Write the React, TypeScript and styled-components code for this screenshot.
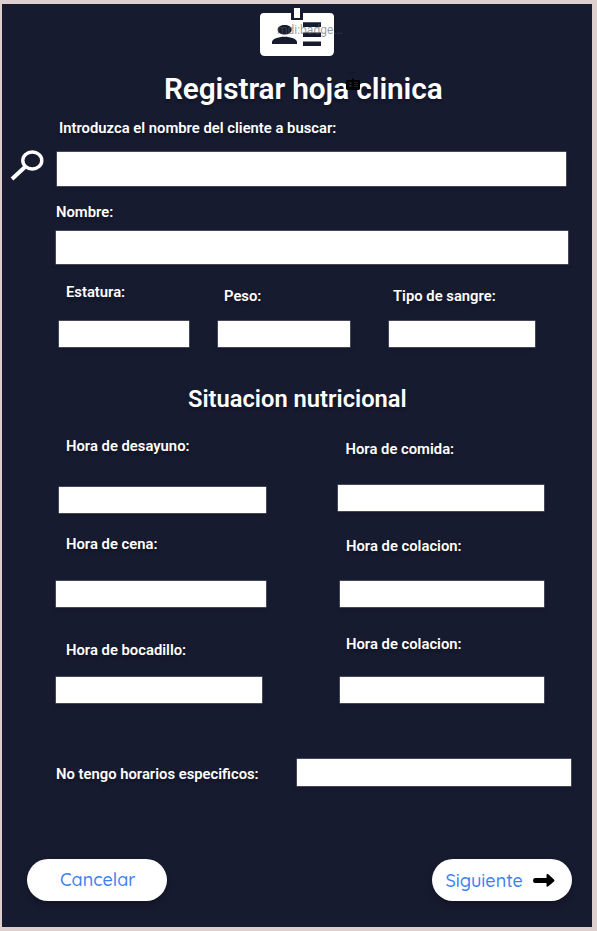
import React from "react";
import styled, { createGlobalStyle } from "styled-components";

const GlobalStyle = createGlobalStyle`
  * { box-sizing: border-box; }
  body { margin: 0; background: #dccfcd; }
`;

const Page = styled.div`
  width: 597px;
  height: 931px;
  padding: 4px 5.5px 4.5px 2px;
  background: #dccfcd;
  overflow: hidden;
`;

const Panel = styled.main`
  display: flex;
  flex-direction: column;
  height: 922.5px;
  background: #171b30;
  color: #fff;
  font-family: Roboto, "Liberation Sans", sans-serif;
`;

const Header = styled.header`
  position: relative;
  height: 56px;
  padding: 4px 0 0 258px;
`;

const BadgeCaption = styled.span`
  position: absolute;
  left: 275px;
  top: 18px;
  font-size: 12px;
  line-height: 16px;
  color: rgba(90, 90, 90, 0.6);
  white-space: nowrap;
`;

const Title = styled.h1`
  position: relative;
  height: 58px;
  margin: 0 0 0 162px;
  font-size: 29.8px;
  line-height: 58px;
  font-weight: 600;
  letter-spacing: -0.1px;
  white-space: nowrap;
  text-shadow: 0 3px 3px rgba(0, 0, 0, 0.25);
`;

const SmallBadge = styled.svg`
  position: absolute;
  left: 182px;
  top: 12px;
`;

const Subtitle = styled.h2`
  margin: 0 0 0 186px;
  padding-top: 37px;
  height: 87px;
  font-size: 23.7px;
  line-height: 31px;
  font-weight: 600;
  white-space: nowrap;
  text-shadow: 0 3px 3px rgba(0, 0, 0, 0.25);
`;

const Row = styled.div<{ $height: number; $left: number }>`
  display: flex;
  flex: none;
  align-items: flex-end;
  height: ${(p) => p.$height}px;
  padding-left: ${(p) => p.$left}px;
`;

const FieldBox = styled.label<{ $gap: number; $before: number; $lift: number }>`
  display: flex;
  flex-direction: column;
  gap: ${(p) => p.$gap}px;
  margin-left: ${(p) => p.$before}px;
  margin-bottom: ${(p) => p.$lift}px;
`;

const LabelText = styled.span<{ $indent?: number }>`
  padding-left: ${(p) => p.$indent ?? 0}px;
  font-size: 14.8px;
  line-height: 20px;
  font-weight: 600;
  white-space: nowrap;
  text-shadow: 0 3px 3px rgba(0, 0, 0, 0.25);
`;

const Input = styled.input<{ $width: number; $height: number }>`
  display: block;
  width: ${(p) => p.$width}px;
  height: ${(p) => p.$height}px;
  padding: 0 8px;
  border: 0;
  border-radius: 0;
  background: #fff;
  box-shadow: 0 0 0 0.5px #777987, 0 3px 4px rgba(0, 0, 0, 0.15);
`;

const SearchIcon = styled.svg`
  flex: none;
  width: 47px;
  height: 37px;
`;

const Inline = styled.label`
  display: flex;
  align-items: center;
  justify-content: space-between;
  height: 28px;
  margin: 55.5px 20.5px 0 54px;

  ${LabelText} {
    padding-top: 4px;
  }
`;

const Actions = styled.footer`
  display: flex;
  justify-content: space-between;
  margin: 73px 20px 0 25px;
`;

const Pill = styled.button<{ $left: number; $bottom: number }>`
  display: flex;
  align-items: center;
  gap: 10px;
  width: 140px;
  height: 42px;
  padding: 0 0 ${(p) => p.$bottom}px ${(p) => p.$left}px;
  border: 0;
  border-radius: 21px;
  background: #fff;
  color: #3c7ff5;
  font: 500 18px Quicksand, Lato, sans-serif;
  box-shadow: 0 4px 6px rgba(0, 0, 0, 0.25);
`;

type FieldProps = {
  label: string;
  width: number;
  height?: number;
  gap: number;
  indent?: number;
  before?: number;
  lift?: number;
};

const Field = ({ label, width, height = 26, gap, indent, before = 0, lift = 0 }: FieldProps) => (
  <FieldBox $gap={gap} $before={before} $lift={lift}>
    <LabelText $indent={indent}>{label}</LabelText>
    <Input $width={width} $height={height} />
  </FieldBox>
);

export default function App() {
  return (
    <Page>
      <GlobalStyle />
      <Panel>
        <Header>
          <svg width="74" height="48" viewBox="0 0 74 48" display="block">
            <path
              fill="#fff"
              fillRule="evenodd"
              d="M4 5H31V12H43V5H70Q74 5 74 9V43Q74 48 69 48H5Q0 48 0 43V9Q0 5 4 5ZM43 14.300V19H61V14.300ZM43 24.500V29H61V24.500ZM43 33.500V38H61V33.500ZM24.700 17C20.800 17 17.700 19 17.700 21.700C17.700 24.500 20.800 26.500 24.700 26.500C28.600 26.500 31.700 24.500 31.700 21.700C31.700 19 28.600 17 24.700 17ZM12 36H37V34C37 31 31 28.700 24.500 28.700C18 28.700 12 31 12 34Z"
            />
            <path fill="#fff" d="M34 0H40V10H34Z" />
          </svg>
          <BadgeCaption>mdi:badge...</BadgeCaption>
        </Header>
        <Title>
          Registrar hoja clinica
          <SmallBadge width="14" height="19" viewBox="0 0 14 19">
            <path fill="#080a12" d="M1 .5h1v1H1zM4 .5h1v1H4zM7 .5h1v1H7z" />
            <path fill="#000" d="M1 8H6V6.500H8V8H13L14 9V17L13 18H1L0 17V9Z" />
            <path
              fill="#20232f"
              d="M8 10h4v1H8zM8 12h4v1H8zM8 14h4v1H8zM3.500 10h2v2h-2zM2.500 14q2-2 4 0v.800h-4z"
            />
          </SmallBadge>
        </Title>
        <Row $height={68} $left={8}>
          <SearchIcon viewBox="0 0 47 37">
            <ellipse cx="22.3" cy="11.500" rx="9.500" ry="8.500" fill="none" stroke="#fff" strokeWidth="3.400" />
            <path d="M15.500 17.500L2 30" stroke="#fff" strokeWidth="4" fill="none" />
          </SearchIcon>
          <Field label="Introduzca el nombre del cliente a buscar:" width={509} height={34} gap={14} indent={2} />
        </Row>
        <Row $height={78} $left={54}>
          <Field label="Nombre:" width={512} height={33} gap={9} />
        </Row>
        <Row $height={82.5} $left={57}>
          <Field label="Estatura:" width={130} gap={19} indent={7} />
          <Field label="Peso:" width={132} gap={15} indent={6} before={29} />
          <Field label="Tipo de sangre:" width={146} gap={15} indent={4} before={39} />
        </Row>
        <Subtitle>Situacion nutricional</Subtitle>
        <Row $height={79} $left={57}>
          <Field label="Hora de desayuno:" width={207} gap={30.5} indent={7} />
          <Field label="Hora de comida:" width={206} gap={26} indent={7.5} before={72} lift={2} />
        </Row>
        <Row $height={94} $left={54}>
          <Field label="Hora de cena:" width={210} gap={27} indent={10} />
          <Field label="Hora de colacion:" width={204} gap={25} indent={6} before={74} />
        </Row>
        <Row $height={96} $left={54}>
          <Field label="Hora de bocadillo:" width={206} gap={16.5} indent={10} />
          <Field label="Hora de colacion:" width={204} gap={23} indent={6} before={78} />
        </Row>
        <Inline>
          <LabelText>No tengo horarios especificos:</LabelText>
          <Input $width={274} $height={27} />
        </Inline>
        <Actions>
          <Pill type="button" $left={33} $bottom={1}>Cancelar</Pill>
          <Pill type="button" $left={14} $bottom={0}>
            Siguiente
            <svg width="22" height="14" viewBox="0 0 22 14">
              <path
                fill="#000"
                d="M2 5H13.500V2Q13.500 .5 15 1L21 6.500Q22 7.500 21 8.500L15 13.500Q13.500 14 13.500 13V10H2Q0 10 0 7.500Q0 5 2 5Z"
              />
            </svg>
          </Pill>
        </Actions>
      </Panel>
    </Page>
  );
}
